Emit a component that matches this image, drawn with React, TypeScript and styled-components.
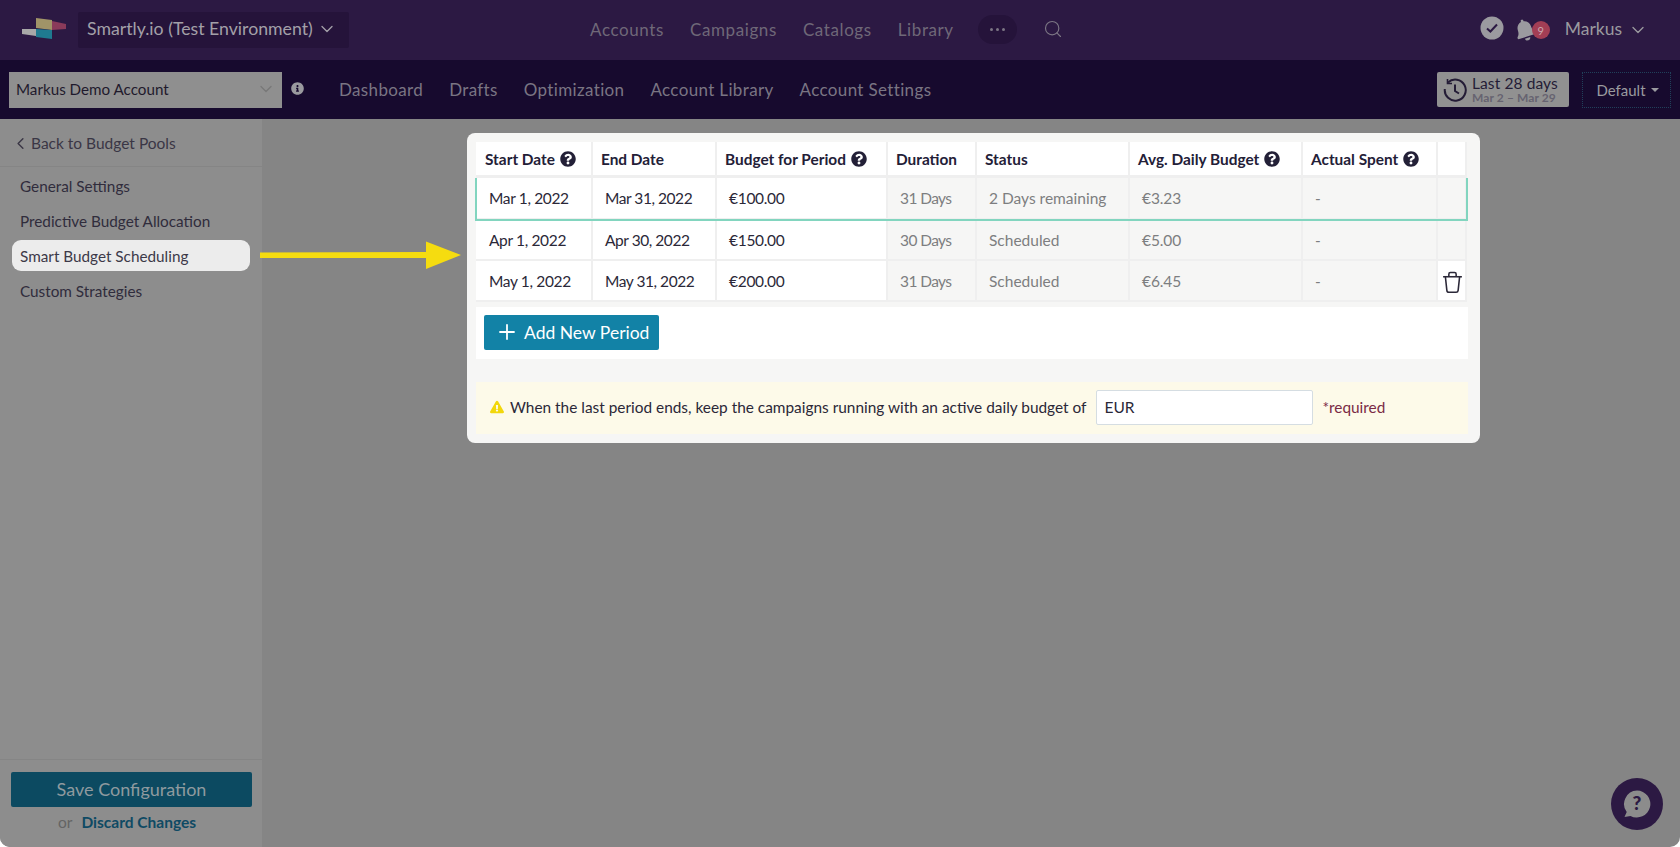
import React from 'react'
import styled, { createGlobalStyle } from 'styled-components'
import { ChevronDown, ChevronLeft, Plus, Search } from 'lucide-react'
import { FaBell, FaExclamationTriangle, FaInfoCircle, FaQuestionCircle } from 'react-icons/fa'

const GlobalStyle = createGlobalStyle`
  html, body {
    margin: 0;
    height: 100%;
    background: #ffffff;
  }
  body {
    font-family: Lato, "Open Sans", sans-serif;
    font-size: 15px;
    overflow: hidden;
  }
`

const columns = '117px 124px 171px 89px 153px 173px 135px 29px'

const Page = styled.div`
  width: 1680px;
  height: 847px;
  display: flex;
  flex-direction: column;
  overflow: hidden;
  position: relative;
  border-radius: 0 0 10px 10px;
  background: #858585;
`

const TopBar = styled.header`
  height: 60px;
  flex: none;
  display: flex;
  align-items: center;
  background: #2c1943;
  padding-left: 22px;
`

const Logo = styled.svg`
  width: 46px;
  height: 24px;
  flex: none;
`

const OrgSelect = styled.div`
  width: 271px;
  height: 36px;
  margin-left: 10px;
  padding: 0 0 3px 9px;
  box-sizing: border-box;
  display: flex;
  align-items: center;
  gap: 4px;
  background: #25133a;
  border-radius: 2px;
  color: #a3a0a8;
  font-size: 17.7px;
  white-space: nowrap;
`

const MainNav = styled.nav`
  display: flex;
  align-items: center;
  margin: -2px 0 0 241px;
`

const MainLink = styled.span`
  color: #6f6878;
  font-size: 17px;
  letter-spacing: 0.6px;
  margin-right: 26px;
`

const MorePill = styled.span`
  width: 39px;
  height: 29px;
  margin: 0 26px 0 -2px;
  border-radius: 15px;
  background: #25133a;
  color: #7c7684;
  display: flex;
  align-items: center;
  justify-content: center;
  gap: 3px;
`

const Dot = styled.i`
  width: 3px;
  height: 3px;
  border-radius: 50%;
  background: #7c7684;
`

const UserArea = styled.div`
  margin-left: auto;
  display: flex;
  align-items: center;
  padding-right: 32px;
  color: #9b9a9f;
`

const CheckBadge = styled.svg`
  width: 24px;
  height: 24px;
  margin: -5px 10px 0 0;
`

const BellWrap = styled.span`
  position: relative;
  width: 36px;
  height: 24px;
  margin-right: 15px;
  font-size: 22px;
  display: flex;
  align-items: center;
  svg { transform: rotate(-18deg); }
`

const Count = styled.b`
  position: absolute;
  left: 18px;
  top: 3px;
  width: 18px;
  height: 18px;
  border-radius: 50%;
  background: #a33e55;
  color: #c9a6ae;
  font-size: 11px;
  font-weight: 400;
  display: flex;
  align-items: center;
  justify-content: center;
`

const UserName = styled.span`
  font-size: 17.5px;
  margin: -3px 6px 0 0;
`

const SubBar = styled.div`
  height: 59px;
  flex: none;
  display: flex;
  align-items: center;
  background: #170a2e;
  padding-left: 9px;
`

const AccountSelect = styled.div`
  width: 273px;
  height: 36px;
  box-sizing: border-box;
  padding: 0 6px 1px 7px;
  display: flex;
  align-items: center;
  justify-content: space-between;
  background: #8f8f8f;
  color: #1f1a2c;
  font-size: 15.2px;
  svg { color: #787878; }
`

const InfoIcon = styled(FaInfoCircle)`
  color: #9a9a9f;
  font-size: 13px;
  margin-left: 9px;
  margin-top: -3px;
`

const SubNav = styled.nav`
  display: flex;
  margin-left: 35px;
`

const SubLink = styled.span`
  color: #7a7583;
  font-size: 17px;
  letter-spacing: 0.35px;
  margin-right: 26px;
`

const RangeButton = styled.div`
  margin-left: auto;
  width: 132px;
  height: 35px;
  box-sizing: border-box;
  padding-left: 6px;
  display: flex;
  align-items: center;
  gap: 5px;
  background: #919191;
  border-radius: 2px;
  color: #241c36;
`

const RangeText = styled.div`
  display: flex;
  flex-direction: column;
  font-size: 15.5px;
  letter-spacing: 0.1px;
  line-height: 16px;
  white-space: nowrap;
`

const RangeDates = styled.span`
  color: #666370;
  font-size: 12px;
  line-height: 13px;
  letter-spacing: 0.1px;
  font-weight: 700;
`

const ViewButton = styled.div`
  width: 89px;
  height: 36px;
  box-sizing: border-box;
  margin: 0 9px 0 13px;
  padding-left: 2px;
  display: flex;
  align-items: center;
  justify-content: center;
  gap: 5px;
  border: 1px dotted #21405a;
  color: #9a9a9f;
  font-size: 15px;
`

const Caret = styled.i`
  border-left: 4px solid transparent;
  border-right: 4px solid transparent;
  border-top: 4px solid #9a9a9f;
`

const Body = styled.div`
  flex: 1;
  display: flex;
  min-height: 0;
`

const Sidebar = styled.aside`
  width: 262px;
  flex: none;
  display: flex;
  flex-direction: column;
  background: #8d8d8d;
  color: #302c3c;
`

const BackLink = styled.div`
  height: 48px;
  box-sizing: border-box;
  padding: 1px 0 0 11px;
  display: flex;
  align-items: center;
  gap: 1px;
  border-bottom: 1px solid #858585;
  color: #3a3645;
  font-size: 15.5px;
`

const Menu = styled.div`
  display: flex;
  flex-direction: column;
  margin: 1px 12px 0 12px;
  flex: 1;
`

const MenuItem = styled.div<{ $active?: boolean }>`
  height: ${p => (p.$active ? '31px' : '35px')};
  margin: ${p => (p.$active ? '2px 0' : '0')};
  display: flex;
  align-items: center;
  padding-left: 8px;
  border-radius: 9px;
  background: ${p => (p.$active ? '#ececec' : 'transparent')};
  font-size: 15.3px;
  color: ${p => (p.$active ? '#3c3948' : '#302c3c')};
`

const SaveArea = styled.div`
  height: 88px;
  flex: none;
  box-sizing: border-box;
  padding: 12px 10px 0 11px;
  border-top: 1px solid #858585;
`

const SaveButton = styled.div`
  height: 35px;
  box-sizing: border-box;
  padding-bottom: 2px;
  display: flex;
  align-items: center;
  justify-content: center;
  background: #0c4a61;
  border-radius: 2px;
  color: #8f9a9f;
  font-size: 18px;
`

const DiscardRow = styled.div`
  display: flex;
  justify-content: center;
  gap: 9px;
  margin-top: 6px;
  padding-right: 9px;
  font-size: 15.5px;
  color: #646464;
`

const DiscardLink = styled.span`
  color: #0f4a64;
  font-weight: 700;
`

const Content = styled.main`
  flex: 1;
  padding: 14px 0 0 205px;
`

const Modal = styled.section`
  width: 1013px;
  height: 310px;
  box-sizing: border-box;
  padding: 9px 12px 0 9px;
  border-radius: 8px;
  background: #f6f6f5;
`

const Table = styled.div`
  width: 991px;
  display: flex;
  flex-direction: column;
`

const Row = styled.div<{ $current?: boolean }>`
  display: grid;
  grid-template-columns: ${columns};
  position: relative;
  height: ${p => (p.$current ? '42px' : '41px')};

  ${p => p.$current && `
    &::after {
      content: '';
      position: absolute;
      z-index: 1;
      left: -1px;
      right: -1px;
      top: 0;
      bottom: -1px;
      border: solid #82d5bf;
      border-width: 0 2px 2px 2px;
      pointer-events: none;
    }
  `}
`

const HeadRow = styled(Row)`
  height: 36px;
`

const HeadCell = styled.div`
  display: flex;
  align-items: center;
  gap: 5px;
  padding-left: 8px;
  background: #ffffff;
  border: 1px solid #efefef;
  border-width: 0 2px 3px 0;
  font-weight: 700;
  font-size: 15.4px;
  color: #232037;
  white-space: nowrap;
  svg { font-size: 16px; }

  &:first-child { padding-left: 9px; }
`

const Cell = styled.div<{ $muted?: boolean; $tight?: number }>`
  display: flex;
  align-items: center;
  padding-left: 12px;
  background: ${p => (p.$muted ? '#f6f6f5' : '#ffffff')};
  border: 1px solid #efefef;
  border-width: 0 2px 2px 0;
  font-size: 15.5px;
  letter-spacing: ${p => p.$tight ?? 0}px;
  color: ${p => (p.$muted ? '#7d7e80' : '#2b2838')};
  white-space: nowrap;

  &:first-child { padding-left: 13px; }
`

const TrashCell = styled(Cell)`
  padding: 4px 0 0 3px;
  color: #2b2838;
`

const AddArea = styled.div`
  height: 52px;
  margin-top: 5px;
  box-sizing: border-box;
  padding: 8px 8px;
  background: #ffffff;
`

const AddButton = styled.div`
  width: 175px;
  height: 35px;
  display: flex;
  align-items: center;
  padding: 0 0 1px 11px;
  box-sizing: border-box;
  gap: 5px;
  background: #1282a6;
  border-radius: 2px;
  color: #ffffff;
  font-size: 17.5px;
`

const Notice = styled.div`
  height: 52px;
  margin-top: 23px;
  box-sizing: border-box;
  padding: 0 0 2px 14px;
  display: flex;
  align-items: center;
  background: #fdfae9;
  font-size: 15.4px;
  color: #2b2838;
`

const WarnIcon = styled(FaExclamationTriangle)`
  color: #f2d70c;
  font-size: 14px;
  margin-right: 6px;
`

const Amount = styled.div`
  width: 217px;
  height: 35px;
  box-sizing: border-box;
  margin-left: 10px;
  padding-left: 7px;
  display: flex;
  align-items: center;
  background: #ffffff;
  border: 1px solid #d5dde2;
  border-radius: 2px;
  font-size: 15.5px;
`

const Required = styled.span`
  margin-left: 9px;
  color: #7a2a45;
`

const Arrow = styled.svg`
  position: absolute;
  left: 258px;
  top: 238px;
  width: 206px;
  height: 36px;
`

const HelpBubble = styled.div`
  position: absolute;
  left: 1611px;
  top: 778px;
  width: 52px;
  height: 52px;
  border-radius: 50%;
  background: #2c1943;
  display: flex;
  align-items: center;
  justify-content: center;
`

const Q = () => <FaQuestionCircle color="#232037" />

const periods = [
  ['Mar 1, 2022', 'Mar 31, 2022', '€100.00', '31 Days', '2 Days remaining', '€3.23'],
  ['Apr 1, 2022', 'Apr 30, 2022', '€150.00', '30 Days', 'Scheduled', '€5.00'],
  ['May 1, 2022', 'May 31, 2022', '€200.00', '31 Days', 'Scheduled', '€6.45'],
]

const App: React.FC = () => {
  return (
    <Page>
      <GlobalStyle />
      <TopBar>
        <Logo viewBox="0 0 46 24">
          <polygon points="14,0 30,2 30,12 14,10" fill="#a09468" />
          <polygon points="30,3 44,6 44,11 30,12" fill="#8a3a5a" />
          <polygon points="14,11 30,12 30,21 14,19" fill="#1f7a90" />
          <polygon points="0,11 14,11 14,18 0,16" fill="#a8a8a8" />
        </Logo>
        <OrgSelect>
          Smartly.io (Test Environment)
          <ChevronDown size={20} strokeWidth={1.6} />
        </OrgSelect>
        <MainNav>
          <MainLink>Accounts</MainLink>
          <MainLink>Campaigns</MainLink>
          <MainLink>Catalogs</MainLink>
          <MainLink>Library</MainLink>
          <MorePill><Dot /><Dot /><Dot /></MorePill>
          <Search size={20} strokeWidth={1.4} color="#7c7684" />
        </MainNav>
        <UserArea>
          <CheckBadge viewBox="0 0 24 24">
            <circle cx="12" cy="12" r="11.5" fill="#9b9a9f" />
            <path d="M7 12.5l3.4 3L17 8.5" fill="none" stroke="#2c1943" strokeWidth="2" />
          </CheckBadge>
          <BellWrap>
            <FaBell />
            <Count>9</Count>
          </BellWrap>
          <UserName>Markus</UserName>
          <ChevronDown size={20} strokeWidth={1.6} />
        </UserArea>
      </TopBar>
      <SubBar>
        <AccountSelect>
          Markus Demo Account
          <ChevronDown size={20} strokeWidth={1.6} />
        </AccountSelect>
        <InfoIcon />
        <SubNav>
          <SubLink>Dashboard</SubLink>
          <SubLink>Drafts</SubLink>
          <SubLink>Optimization</SubLink>
          <SubLink>Account Library</SubLink>
          <SubLink>Account Settings</SubLink>
        </SubNav>
        <RangeButton>
          <svg width="24" height="24" viewBox="0 0 24 24" fill="none" stroke="#241c36" strokeWidth="2">
            <path d="M5 4.5A10.5 10.5 0 1 1 1.8 11" />
            <path d="M4.5 1v4.5H9" strokeWidth="1.6" />
            <path d="M12 6.5V13l4 2.5" />
          </svg>
          <RangeText>
            Last 28 days
            <RangeDates>Mar 2 – Mar 29</RangeDates>
          </RangeText>
        </RangeButton>
        <ViewButton>Default <Caret /></ViewButton>
      </SubBar>
      <Body>
        <Sidebar>
          <BackLink><ChevronLeft size={19} strokeWidth={1.8} />Back to Budget Pools</BackLink>
          <Menu>
            <MenuItem>General Settings</MenuItem>
            <MenuItem>Predictive Budget Allocation</MenuItem>
            <MenuItem $active>Smart Budget Scheduling</MenuItem>
            <MenuItem>Custom Strategies</MenuItem>
          </Menu>
          <SaveArea>
            <SaveButton>Save Configuration</SaveButton>
            <DiscardRow>or <DiscardLink>Discard Changes</DiscardLink></DiscardRow>
          </SaveArea>
        </Sidebar>
        <Content>
          <Modal>
            <Table>
              <HeadRow>
                <HeadCell>Start Date <Q /></HeadCell>
                <HeadCell>End Date</HeadCell>
                <HeadCell>Budget for Period <Q /></HeadCell>
                <HeadCell>Duration</HeadCell>
                <HeadCell>Status</HeadCell>
                <HeadCell>Avg. Daily Budget <Q /></HeadCell>
                <HeadCell>Actual Spent <Q /></HeadCell>
                <HeadCell />
              </HeadRow>
              {periods.map((p, i) => (
                <Row key={i} $current={i === 0}>
                  <Cell $tight={-0.35}>{p[0]}</Cell>
                  <Cell $tight={-0.45}>{p[1]}</Cell>
                  <Cell $tight={-0.3}>{p[2]}</Cell>
                  <Cell $muted $tight={-0.6}>{p[3]}</Cell>
                  <Cell $muted>{p[4]}</Cell>
                  <Cell $muted $tight={-0.1}>{p[5]}</Cell>
                  <Cell $muted>-</Cell>
                  {i === 2 ? (
                    <TrashCell>
                      <svg width="23" height="23" viewBox="0 0 22 22" fill="none" stroke="#2b2838" strokeWidth="1.5">
                        <path d="M2 5.5h18" />
                        <path d="M7.5 5.5V3a1.5 1.5 0 0 1 1.5-1.5h4A1.5 1.5 0 0 1 14.5 3v2.5" />
                        <path d="M4.2 5.5l1.4 13a2 2 0 0 0 2 1.8h6.8a2 2 0 0 0 2-1.8l1.4-13" />
                      </svg>
                    </TrashCell>
                  ) : <Cell $muted />}
                </Row>
              ))}
            </Table>
            <AddArea>
              <AddButton><Plus size={24} strokeWidth={1.8} />Add New Period</AddButton>
            </AddArea>
            <Notice>
              <WarnIcon />
              When the last period ends, keep the campaigns running with an active daily budget of
              <Amount>EUR</Amount>
              <Required>*required</Required>
            </Notice>
          </Modal>
        </Content>
      </Body>
      <Arrow viewBox="0 0 206 36">
        <path d="M2 14.5L168 14V3.5L203 17L168 31V20L2 20Z" fill="#f5dc10" />
      </Arrow>
      <HelpBubble>
        <svg width="30" height="30" viewBox="0 0 30 30">
          <path d="M15 1.5a13.5 13.5 0 1 1-6.5 25.4L2.5 28l2.2-5A13.5 13.5 0 0 1 15 1.5Z" fill="#8c8c8c" />
          <text x="15" y="21" textAnchor="middle" fontSize="19" fontWeight="900" fill="#2c1943" fontFamily="Lato, sans-serif">?</text>
        </svg>
      </HelpBubble>
    </Page>
  )
}

export default App
